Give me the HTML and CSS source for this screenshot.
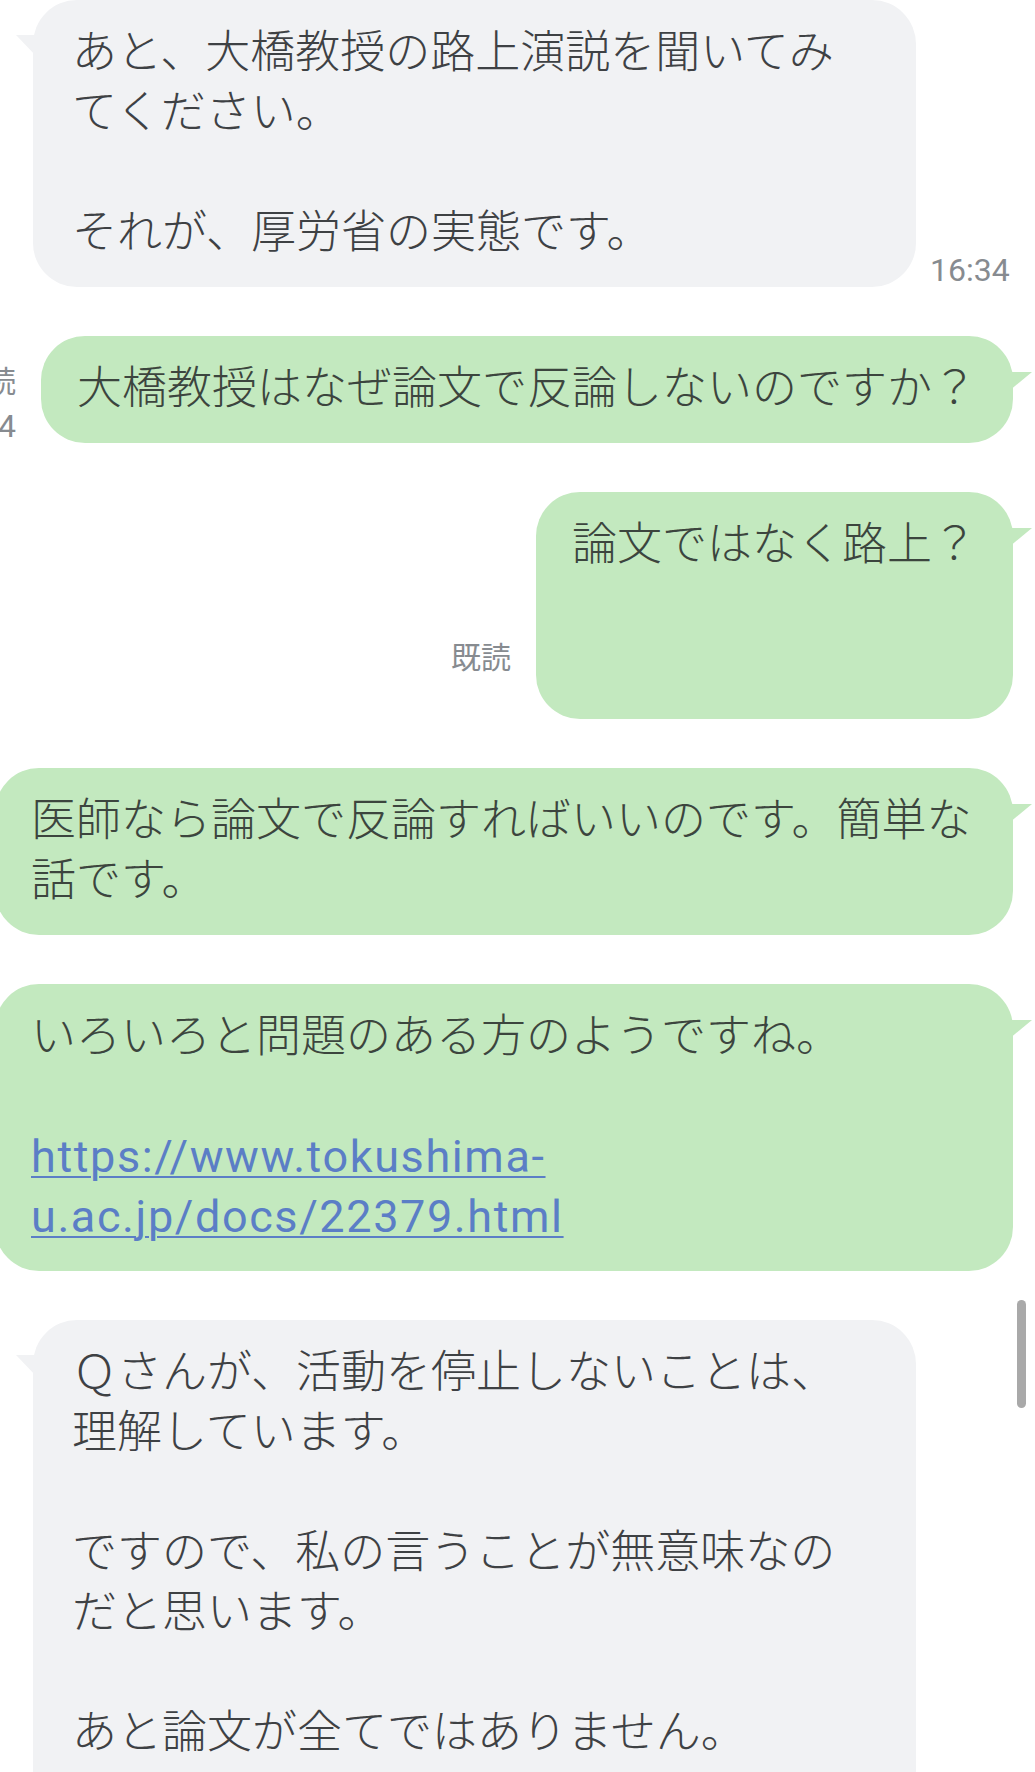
FILE: index.html
```html
<!DOCTYPE html>
<html lang="ja">
<head>
<meta charset="utf-8">
<title>トーク</title>
<link rel="stylesheet" href="styles.css">
</head>
<body>
<div class="chat">
  <div class="row in">
    <div class="bubble gray">あと、大橋教授の路上演説を聞いてみてください。

それが、厚労省の実態です。</div>
    <div class="meta"><span class="time">16:34</span></div>
  </div>

  <div class="row out">
    <div class="meta"><span class="read">既読</span><span class="time">16:34</span></div>
    <div class="bubble green">大橋教授はなぜ論文で反論しないのですか？</div>
  </div>

  <div class="row out">
    <div class="meta"><span class="read">既読</span><span class="time">&nbsp;</span></div>
    <div class="bubble green">論文ではなく路上？

&nbsp;</div>
  </div>

  <div class="row out">
    <div class="bubble green">医師なら論文で反論すればいいのです。簡単な話です。</div>
  </div>

  <div class="row out">
    <div class="bubble green">いろいろと問題のある方のようですね。

<a class="link" href="#">https://www.tokushima-u.ac.jp/docs/22379.html</a></div>
  </div>

  <div class="row in">
    <div class="bubble gray last">Ｑさんが、活動を停止しないことは、理解しています。

ですので、私の言うことが無意味なのだと思います。

あと論文が全てではありません。</div>
  </div>
</div>
<div class="scrollbar"></div>
</body>
</html>
```

FILE: styles.css
```css
html, body {
  margin: 0;
  padding: 0;
  background: #ffffff;
  width: 1035px;
  height: 1772px;
  overflow: hidden;
}

body {
  position: relative;
  font-family: Roboto, "Noto Sans CJK JP", sans-serif;
}

.chat {
  display: flex;
  flex-direction: column;
  gap: 49px;
}

.row {
  display: flex;
  align-items: flex-end;
}

.row.in {
  justify-content: flex-start;
  padding-left: 33px;
}

.row.out {
  justify-content: flex-end;
  padding-right: 22px;
}

.bubble {
  position: relative;
  flex-shrink: 0;
  box-sizing: border-box;
  font-size: 45px;
  line-height: 60px;
  font-weight: 300;
  white-space: pre-wrap;
  word-break: normal;
  line-break: strict;
  border-radius: 44px;
}

.bubble.gray {
  width: 883px;
  background: #f1f2f4;
  color: #3e4144;
  padding: 23px 40px 24px 39px;
}

.bubble.gray.last {
  padding-bottom: 80px;
}

.bubble.green {
  max-width: 1018px;
  background: #c3e9bf;
  color: #3c453e;
  padding: 23px 36px 24px 36px;
}

.bubble.gray::before {
  content: "";
  position: absolute;
  left: -17px;
  top: 35px;
  width: 21px;
  height: 22px;
  background: #f1f2f4;
  clip-path: polygon(0 0, 100% 0, 100% 100%);
}

.bubble.green::after {
  content: "";
  position: absolute;
  right: -19px;
  top: 36px;
  width: 23px;
  height: 19px;
  background: #c3e9bf;
  clip-path: polygon(0 0, 100% 0, 0 100%);
}

.link {
  color: #5b7ec6;
  font-weight: 400;
  letter-spacing: 1.6px;
  text-decoration: underline;
  text-decoration-thickness: 2px;
  text-underline-offset: 4px;
}

.meta {
  flex-shrink: 0;
  display: flex;
  flex-direction: column;
  color: #878b90;
}

.row.in .meta {
  margin-left: 14px;
  align-items: flex-start;
}

.row.out .meta {
  margin-right: 25px;
  align-items: flex-end;
}

.read {
  font-size: 30px;
  line-height: 34px;
  margin-bottom: 10px;
}

.time {
  font-size: 32px;
  line-height: 34px;
}

.scrollbar {
  position: absolute;
  left: 1017px;
  top: 1300px;
  width: 9px;
  height: 108px;
  border-radius: 5px;
  background: #a9a9a9;
}
```
